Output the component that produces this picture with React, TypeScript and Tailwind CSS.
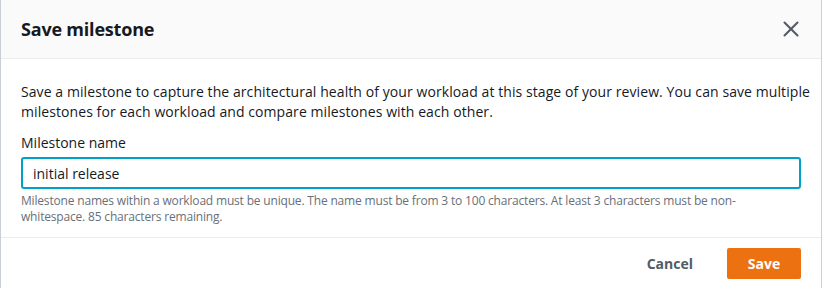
import { X } from "lucide-react";

export default function App() {
  return (
    <main className="h-[288px] w-[823px] bg-white font-['Open_Sans',sans-serif] text-[#16191f]">
      <div className="flex h-full w-[822px] flex-col border-x border-[#c9cfd4] bg-white">
        <header className="flex h-[59px] items-center justify-between border-b border-[#eaeded] bg-[#fafafa] pl-5 pr-[17px]">
          <h2 className="text-[18px] font-bold tracking-[-0.2px]">Save milestone</h2>
          <X className="h-[26px] w-[26px] text-[#545b64]" strokeWidth={1.9} />
        </header>

        <section className="flex h-[179px] flex-col border-b border-[#eaeded] px-5 pt-[23px]">
          <p className="whitespace-nowrap text-[14px] leading-5 tracking-[0.08px]">
            Save a milestone to capture the architectural health of your workload at this stage of
            your review. You can save multiple
            <br />
            milestones for each workload and compare milestones with each other.
          </p>
          <label className="mt-[11px] text-[14px] leading-5">Milestone name</label>
          <div className="mt-[4px] flex h-8 items-center rounded-[3px] border-2 border-[#00a1c9] px-[10px] text-[14px]">
            initial release
          </div>
          <p className="mt-[4px] text-[12px] leading-4 tracking-[-0.18px] text-[#687078]">
            Milestone names within a workload must be unique. The name must be from 3 to 100
            characters. At least 3 characters must be non-
            <br />
            whitespace. 85 characters remaining.
          </p>
        </section>

        <footer className="flex flex-1 items-center justify-end gap-[34px] pr-5">
          <button className="text-[14px] font-bold text-[#545b64]">Cancel</button>
          <button className="h-[31px] w-[74px] rounded-[2px] bg-[#ec7211] text-[14px] font-bold text-white">
            Save
          </button>
        </footer>
      </div>
    </main>
  );
}
